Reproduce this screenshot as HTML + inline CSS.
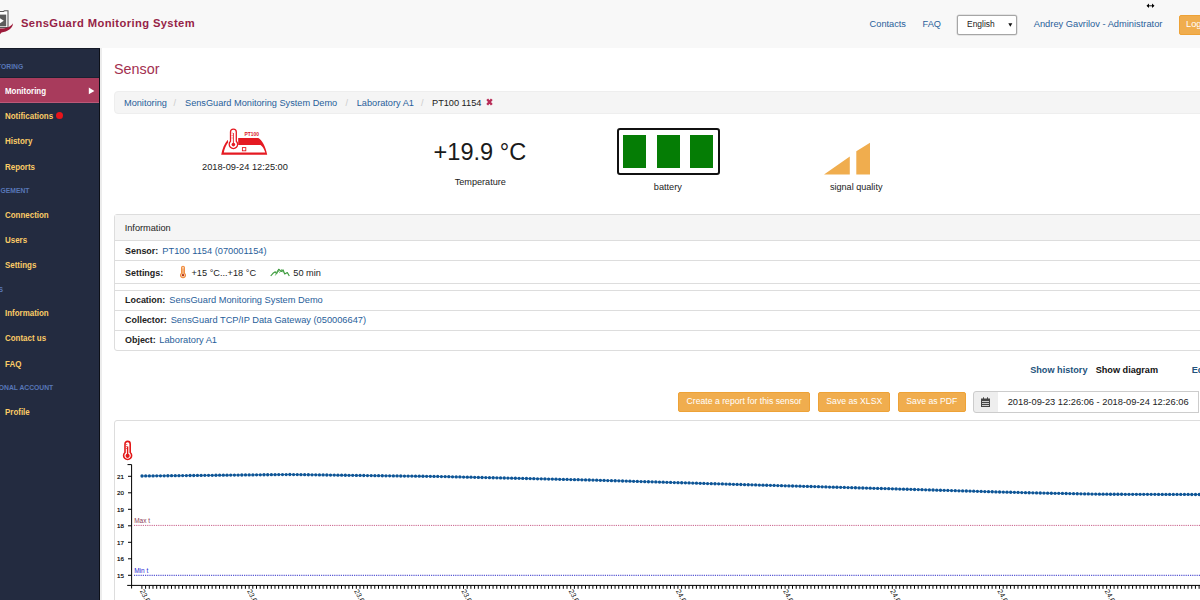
<!DOCTYPE html>
<html><head><meta charset="utf-8"><style>
html,body{margin:0;padding:0;width:1200px;height:600px;overflow:hidden;background:#fff;position:relative;font-family:"Liberation Sans",sans-serif;}
.t{position:absolute;white-space:pre;}
.r{position:absolute;}
</style></head><body>
<div class="r" style="left:0px;top:0px;width:1200px;height:48px;background:#f8f8f8;"></div>
<svg class="r" style="left:0;top:0" width="20" height="40" viewBox="0 0 20 40">
<path d="M-2 11.5 L3.5 11.5 L4.5 10.8 L8 10.8 L8 27.6 L-2 27.6 Z" fill="#fff" stroke="#5a5a5a" stroke-width="1.1"/>
<path d="M-2 14.6 L6.2 14.6 L6.2 26.3 L-2 26.3 Z" fill="#5c5c5c"/>
<path d="M-1 17.6 L3.8 20.8 L-1 24 Z" fill="#fff"/>
<path d="M-2 28.2 C4 29 10.5 27.5 13 23.2 C12.8 28.5 7.5 31.5 1.5 32.4 L-0.5 35 L-2 35 Z" fill="#9c1b3a"/>
</svg>
<div class="t" style="left:21px;top:16.76px;font-size:11.2px;line-height:12.51px;color:#961f47;font-weight:bold;letter-spacing:0.39px;">SensGuard Monitoring System</div>
<div class="t" style="left:869.6px;top:19.06px;font-size:9.22px;line-height:10.30px;color:#28609a;font-weight:normal;">Contacts</div>
<div class="t" style="left:922.6px;top:19.06px;font-size:9.22px;line-height:10.30px;color:#28609a;font-weight:normal;">FAQ</div>
<div class="r" style="left:956.6px;top:14.6px;width:60.4px;height:20px;box-sizing:border-box;background:#fff;border:1px solid #a6a6a6;border-radius:2px;box-shadow:0 0 0 0.5px #d0d0d0;"></div>
<div class="t" style="left:967px;top:19.75px;font-size:8.45px;line-height:9.44px;color:#222;font-weight:normal;">English</div>
<svg class="r" style="left:1008px;top:22.5px" width="5" height="4"><path d="M0.3 0.3 L4.3 0.3 L2.3 3.8 Z" fill="#111"/></svg>
<div class="t" style="left:1033.75px;top:18.98px;font-size:9.3px;line-height:10.39px;color:#28609a;font-weight:normal;">Andrey Gavrilov - Administrator</div>
<div class="r" style="left:1179.3px;top:14.6px;width:40px;height:20.4px;box-sizing:border-box;background:#f0ad4e;border:1px solid #eea236;border-radius:2px;"></div>
<div class="t" style="left:1186px;top:18.98px;font-size:9.3px;line-height:10.39px;color:#fff;font-weight:normal;">Logout</div>
<svg class="r" style="left:1145.5px;top:2px" width="9" height="8"><path d="M1.5 3.8 L7.5 3.8" stroke="#000" stroke-width="0.9"/><path d="M0.5 3.8 L3 1.6 L3 6 Z M8.5 3.8 L6 1.6 L6 6 Z" fill="#000"/></svg>
<div class="r" style="left:0px;top:48px;width:100px;height:552px;background:#232b40;"></div>
<div class="r" style="left:99px;top:48px;width:1px;height:552px;background:#0d1018;"></div>
<div class="r" style="left:0px;top:48px;width:100px;height:1px;background:#151a28;"></div>
<div class="r" style="left:100px;top:48px;width:2px;height:552px;background:#ececec;"></div>
<div class="r" style="left:0px;top:78px;width:99px;height:25px;background:#a83b5c;"></div>
<div class="r" style="left:0px;top:102px;width:99px;height:1px;background:#bb5878;"></div>
<div class="r" style="left:0px;top:77px;width:99px;height:1px;background:#1b2131;"></div>
<div class="t" style="left:-3px;top:62.69px;font-size:6.75px;line-height:7.54px;color:#5877b8;font-weight:bold;">TORING</div>
<div class="t" style="left:5.2px;top:86.08px;font-size:9.3px;line-height:10.39px;color:#fff;font-weight:bold;"><span style="display:inline-block;transform:scaleX(0.855);transform-origin:0 0">Monitoring</span></div>
<svg class="r" style="left:88px;top:87px" width="8" height="8"><path d="M0.8 0.6 L6.4 4 L0.8 7.3 Z" fill="#fff"/></svg>
<div class="t" style="left:5.2px;top:111.08px;font-size:9.3px;line-height:10.39px;color:#fccb66;font-weight:bold;"><span style="display:inline-block;transform:scaleX(0.855);transform-origin:0 0">Notifications</span></div>
<div class="r" style="left:56px;top:112px;width:7px;height:7px;border-radius:50%;background:#e8141a"></div>
<div class="t" style="left:5.2px;top:136.18px;font-size:9.3px;line-height:10.39px;color:#fccb66;font-weight:bold;"><span style="display:inline-block;transform:scaleX(0.855);transform-origin:0 0">History</span></div>
<div class="t" style="left:5.2px;top:161.58px;font-size:9.3px;line-height:10.39px;color:#fccb66;font-weight:bold;"><span style="display:inline-block;transform:scaleX(0.855);transform-origin:0 0">Reports</span></div>
<div class="t" style="left:0.5px;top:187.19px;font-size:6.75px;line-height:7.54px;color:#5877b8;font-weight:bold;">GEMENT</div>
<div class="t" style="left:5.2px;top:210.18px;font-size:9.3px;line-height:10.39px;color:#fccb66;font-weight:bold;"><span style="display:inline-block;transform:scaleX(0.855);transform-origin:0 0">Connection</span></div>
<div class="t" style="left:5.2px;top:235.08px;font-size:9.3px;line-height:10.39px;color:#fccb66;font-weight:bold;"><span style="display:inline-block;transform:scaleX(0.855);transform-origin:0 0">Users</span></div>
<div class="t" style="left:5.2px;top:260.08px;font-size:9.3px;line-height:10.39px;color:#fccb66;font-weight:bold;"><span style="display:inline-block;transform:scaleX(0.855);transform-origin:0 0">Settings</span></div>
<div class="t" style="left:-1.5px;top:285.59px;font-size:6.75px;line-height:7.54px;color:#5877b8;font-weight:bold;">S</div>
<div class="t" style="left:5.2px;top:308.08px;font-size:9.3px;line-height:10.39px;color:#fccb66;font-weight:bold;"><span style="display:inline-block;transform:scaleX(0.855);transform-origin:0 0">Information</span></div>
<div class="t" style="left:5.2px;top:333.28px;font-size:9.3px;line-height:10.39px;color:#fccb66;font-weight:bold;"><span style="display:inline-block;transform:scaleX(0.855);transform-origin:0 0">Contact us</span></div>
<div class="t" style="left:5.2px;top:358.88px;font-size:9.3px;line-height:10.39px;color:#fccb66;font-weight:bold;"><span style="display:inline-block;transform:scaleX(0.855);transform-origin:0 0">FAQ</span></div>
<div class="t" style="left:-1.2px;top:384.29px;font-size:6.75px;line-height:7.54px;color:#5877b8;font-weight:bold;">ONAL ACCOUNT</div>
<div class="t" style="left:5.2px;top:407.18px;font-size:9.3px;line-height:10.39px;color:#fccb66;font-weight:bold;"><span style="display:inline-block;transform:scaleX(0.855);transform-origin:0 0">Profile</span></div>
<div class="t" style="left:114px;top:61.10px;font-size:14.36px;line-height:16.04px;color:#a3304f;font-weight:normal;">Sensor</div>
<div class="r" style="left:114px;top:91px;width:1100px;height:23px;box-sizing:border-box;background:#f5f5f5;border:1px solid #eeeeee;border-radius:4px;"></div>
<div class="t" style="left:124px;top:97.67px;font-size:9.2px;line-height:10.28px;color:#28609a;font-weight:normal;">Monitoring</div>
<div class="t" style="left:173.5px;top:97.67px;font-size:9.2px;line-height:10.28px;color:#ccc;font-weight:normal;">/</div>
<div class="t" style="left:185px;top:97.67px;font-size:9.2px;line-height:10.28px;color:#28609a;font-weight:normal;">SensGuard Monitoring System Demo</div>
<div class="t" style="left:345.5px;top:97.67px;font-size:9.2px;line-height:10.28px;color:#ccc;font-weight:normal;">/</div>
<div class="t" style="left:356.7px;top:97.67px;font-size:9.2px;line-height:10.28px;color:#28609a;font-weight:normal;">Laboratory A1</div>
<div class="t" style="left:421px;top:97.67px;font-size:9.2px;line-height:10.28px;color:#ccc;font-weight:normal;">/</div>
<div class="t" style="left:432px;top:97.67px;font-size:9.2px;line-height:10.28px;color:#222;font-weight:normal;">PT100 1154</div>
<svg class="r" style="left:486px;top:97.5px" width="7" height="8"><path d="M1.2 1.2 L5.8 6.8 M5.8 1.2 L1.2 6.8" stroke="#b82d58" stroke-width="2.3"/></svg>
<svg class="r" style="left:215px;top:122px" width="60" height="40" viewBox="215 122 60 40">
<path d="M221.2 154.7 C222.3 148.5 224.3 144 227.8 139.7 L228.2 142.2 C225.8 145.3 224.6 148.8 223.8 152.6 L265.3 152.6 C264 148.8 262.5 146.3 260.5 145 L238.2 145 L238.2 138 L258.3 138 C262.5 140.5 265.5 146.5 267.2 154.7 Z" fill="#e51a22"/>
<path d="M230.5 141.3 L230.5 132 A2.9 2.9 0 0 1 236.3 132 L236.3 141.3 A4.2 4.2 0 1 1 230.5 141.3 Z" fill="#fff" stroke="#e51a22" stroke-width="1.3"/>
<path d="M233.4 133 L233.4 144" stroke="#e51a22" stroke-width="0.9"/>
<circle cx="233.4" cy="144.6" r="1.8" fill="#e51a22"/>
<path d="M231.6 133 L232.6 133 M231.6 135.5 L232.6 135.5 M231.6 138 L232.6 138" stroke="#e51a22" stroke-width="0.6"/>
<rect x="242.4" y="147.6" width="3.4" height="3.2" fill="none" stroke="#e51a22" stroke-width="0.9"/>
<text x="244.6" y="135.5" font-family="Liberation Sans" font-weight="bold" font-size="4.9" fill="#d8141e" textLength="14.3">PT100</text>
</svg>
<div class="t" style="left:202px;top:162.12px;font-size:9.26px;line-height:10.34px;color:#222;font-weight:normal;">2018-09-24 12:25:00</div>
<div class="t" style="left:433.6px;top:138.59px;font-size:23.55px;line-height:26.31px;color:#1a1a1a;font-weight:normal;">+19.9 °C</div>
<div class="t" style="left:454.7px;top:177.03px;font-size:9.14px;line-height:10.21px;color:#222;font-weight:normal;">Temperature</div>
<div class="r" style="left:617px;top:128px;width:103px;height:46.5px;box-sizing:border-box;border:2.4px solid #111;border-radius:3px;background:#fff;"></div>
<div class="r" style="left:623px;top:134.9px;width:23.2px;height:32.7px;background:#057d05;"></div>
<div class="r" style="left:656.5px;top:134.9px;width:23.2px;height:32.7px;background:#057d05;"></div>
<div class="r" style="left:690px;top:134.9px;width:23.2px;height:32.7px;background:#057d05;"></div>
<div class="t" style="left:653.8px;top:182.42px;font-size:9.2px;line-height:10.28px;color:#222;font-weight:normal;">battery</div>
<svg class="r" style="left:810px;top:130px" width="80" height="50" viewBox="810 130 80 50"><path d="M824 174.4 L849.8 156.6 L849.8 174.4 Z M856.3 174.4 L856.3 151.2 L870 142.8 L870 174.4 Z" fill="#f0ad4e"/></svg>
<div class="t" style="left:829.9px;top:182.06px;font-size:9.1px;line-height:10.16px;color:#222;font-weight:normal;">signal quality</div>
<div class="r" style="left:113.75px;top:214px;width:1100px;height:137px;box-sizing:border-box;border:1px solid #ddd;border-radius:3px;background:#fff;"></div>
<div class="r" style="left:114.75px;top:215px;width:1100px;height:25px;background:#f5f5f5;border-bottom:1px solid #ddd;"></div>
<div class="r" style="left:114.75px;top:260.3px;width:1100px;height:1px;background:#ddd;"></div>
<div class="r" style="left:114.75px;top:282.7px;width:1100px;height:1px;background:#ddd;"></div>
<div class="r" style="left:114.75px;top:290.3px;width:1100px;height:1px;background:#ddd;"></div>
<div class="r" style="left:114.75px;top:310.3px;width:1100px;height:1px;background:#ddd;"></div>
<div class="r" style="left:114.75px;top:330px;width:1100px;height:1px;background:#ddd;"></div>
<div class="t" style="left:124.7px;top:222.67px;font-size:9.2px;line-height:10.28px;color:#222;font-weight:normal;">Information</div>
<div class="t" style="left:125px;top:245.90px;font-size:8.95px;line-height:10.00px;color:#222;font-weight:bold;">Sensor:</div>
<div class="t" style="left:162.3px;top:245.60px;font-size:9.28px;line-height:10.37px;color:#28609a;font-weight:normal;">PT100 1154 (070001154)</div>
<div class="t" style="left:125px;top:267.90px;font-size:8.95px;line-height:10.00px;color:#222;font-weight:bold;">Settings:</div>
<svg class="r" style="left:178px;top:264px" width="10" height="15" viewBox="178 264 10 15"><path d="M181.6 273.2 L181.6 267.6 A1.4 1.4 0 0 1 184.4 267.6 L184.4 273.2 A2.5 2.5 0 1 1 181.6 273.2 Z" fill="#fbd9b8" stroke="#f08a3c" stroke-width="1.1"/><path d="M183 268.5 L183 274" stroke="#f08a3c" stroke-width="1"/><circle cx="183" cy="275.1" r="1.2" fill="#b0301a"/></svg>
<div class="t" style="left:191.5px;top:267.87px;font-size:9.2px;line-height:10.28px;color:#222;font-weight:normal;">+15 °C...+18 °C</div>
<svg class="r" style="left:268px;top:265px" width="24" height="14" viewBox="268 265 24 14"><path d="M270.7 276 L273 273.3 L275.3 271.8 L276.7 273.6 L278.7 269.3 L281.3 271.5 L283 269.8 L284.7 274 L287.3 272.5 L289.3 276" fill="none" stroke="#3c9a3c" stroke-width="1.15" stroke-linejoin="round"/><path d="M275.3 275.5 L277.5 270.5 L279.7 272.5 L281.5 269.5 L283.3 272.7" fill="none" stroke="#5aae5a" stroke-width="0.8"/></svg>
<div class="t" style="left:293.3px;top:267.87px;font-size:9.2px;line-height:10.28px;color:#222;font-weight:normal;">50 min</div>
<div class="t" style="left:125px;top:295.30px;font-size:8.95px;line-height:10.00px;color:#222;font-weight:bold;">Location:</div>
<div class="t" style="left:169.3px;top:295.00px;font-size:9.28px;line-height:10.37px;color:#28609a;font-weight:normal;">SensGuard Monitoring System Demo</div>
<div class="t" style="left:125px;top:315.20px;font-size:8.95px;line-height:10.00px;color:#222;font-weight:bold;">Collector:</div>
<div class="t" style="left:170.7px;top:314.90px;font-size:9.28px;line-height:10.37px;color:#28609a;font-weight:normal;">SensGuard TCP/IP Data Gateway (050006647)</div>
<div class="t" style="left:125px;top:335.20px;font-size:8.95px;line-height:10.00px;color:#222;font-weight:bold;">Object:</div>
<div class="t" style="left:159.3px;top:334.90px;font-size:9.28px;line-height:10.37px;color:#28609a;font-weight:normal;">Laboratory A1</div>
<div class="t" style="left:1030.2px;top:365.04px;font-size:9.13px;line-height:10.20px;color:#23527c;font-weight:bold;">Show history</div>
<div class="t" style="left:1095.7px;top:365.04px;font-size:9.13px;line-height:10.20px;color:#111;font-weight:bold;">Show diagram</div>
<div class="t" style="left:1191.7px;top:365.04px;font-size:9.13px;line-height:10.20px;color:#23527c;font-weight:bold;">Edit</div>
<div class="r" style="left:678.2px;top:391.7px;width:132.0px;height:20.5px;box-sizing:border-box;background:#f0ad4e;border:1px solid #eea236;border-radius:2px;"></div>
<div class="t" style="left:686.5px;top:397.44px;font-size:8.68px;line-height:9.70px;color:#fff;font-weight:normal;">Create a report for this sensor</div>
<div class="r" style="left:818px;top:391.7px;width:72.29999999999995px;height:20.5px;box-sizing:border-box;background:#f0ad4e;border:1px solid #eea236;border-radius:2px;"></div>
<div class="t" style="left:826.3px;top:397.44px;font-size:8.68px;line-height:9.70px;color:#fff;font-weight:normal;">Save as XLSX</div>
<div class="r" style="left:897.5px;top:391.7px;width:68.29999999999995px;height:20.5px;box-sizing:border-box;background:#f0ad4e;border:1px solid #eea236;border-radius:2px;"></div>
<div class="t" style="left:906.3px;top:397.44px;font-size:8.68px;line-height:9.70px;color:#fff;font-weight:normal;">Save as PDF</div>
<div class="r" style="left:973px;top:391.2px;width:26px;height:21.6px;box-sizing:border-box;background:#eee;border:1px solid #ccc;border-radius:3px 0 0 3px;"></div>
<svg class="r" style="left:980px;top:397px" width="11" height="11" viewBox="0 0 11 11"><rect x="1" y="1.5" width="9" height="8.5" fill="#444"/><rect x="2" y="4" width="7" height="1" fill="#ccc"/><rect x="2" y="6" width="7" height="1" fill="#ccc"/><rect x="2" y="8" width="7" height="1" fill="#ccc"/><rect x="3" y="0.3" width="1" height="2" fill="#444"/><rect x="7" y="0.3" width="1" height="2" fill="#444"/></svg>
<div class="r" style="left:998px;top:391.2px;width:200.5px;height:21.6px;box-sizing:border-box;background:#fff;border:1px solid #ccc;border-left:none;"></div>
<div class="t" style="left:1007.7px;top:396.78px;font-size:9.3px;line-height:10.39px;color:#222;font-weight:normal;">2018-09-23 12:26:06 - 2018-09-24 12:26:06</div>
<div class="r" style="left:113.75px;top:420.25px;width:1100px;height:300px;box-sizing:border-box;border:1px solid #ddd;border-radius:3px;background:#fff;"></div>
<svg class="r" style="left:0;top:0" width="1200" height="600" viewBox="0 0 1200 600">
<path d="M125 452.5 L125 444 A2.6 2.6 0 0 1 130.2 444 L130.2 452.5 A4 4 0 1 1 125 452.5 Z" fill="#fff" stroke="#e31818" stroke-width="1.6"/>
<path d="M127.6 446.5 L127.6 455" stroke="#e31818" stroke-width="1.4"/><circle cx="127.6" cy="455.8" r="2.1" fill="#e31818"/>
<path d="M126 444.5 L127.3 444.5 M126 446.5 L127.3 446.5 M126 448.5 L127.3 448.5" stroke="#e31818" stroke-width="0.6"/>
<path d="M131.6 464.6 L131.6 588.5 M127.5 464.6 L131.6 464.6 M127.2 585.4 L1200 585.4" stroke="#000" stroke-width="1"/>
<text x="124" y="478.50" text-anchor="end" font-family="Liberation Sans" font-size="6.2" fill="#000" stroke="#000" stroke-width="0.15">21</text>
<text x="124" y="495.00" text-anchor="end" font-family="Liberation Sans" font-size="6.2" fill="#000" stroke="#000" stroke-width="0.15">20</text>
<text x="124" y="511.50" text-anchor="end" font-family="Liberation Sans" font-size="6.2" fill="#000" stroke="#000" stroke-width="0.15">19</text>
<text x="124" y="528.00" text-anchor="end" font-family="Liberation Sans" font-size="6.2" fill="#000" stroke="#000" stroke-width="0.15">18</text>
<text x="124" y="544.50" text-anchor="end" font-family="Liberation Sans" font-size="6.2" fill="#000" stroke="#000" stroke-width="0.15">17</text>
<text x="124" y="561.00" text-anchor="end" font-family="Liberation Sans" font-size="6.2" fill="#000" stroke="#000" stroke-width="0.15">16</text>
<text x="124" y="577.50" text-anchor="end" font-family="Liberation Sans" font-size="6.2" fill="#000" stroke="#000" stroke-width="0.15">15</text>
<path d="M128 476.30 L131.6 476.30 M128 492.80 L131.6 492.80 M128 509.30 L131.6 509.30 M128 525.80 L131.6 525.80 M128 542.30 L131.6 542.30 M128 558.80 L131.6 558.80 M128 575.30 L131.6 575.30" stroke="#000" stroke-width="1"/>
<path d="M141.90 585.4 L141.90 588.8 M145.60 585.4 L145.60 588.8 M149.29 585.4 L149.29 588.8 M152.99 585.4 L152.99 588.8 M156.69 585.4 L156.69 588.8 M160.38 585.4 L160.38 588.8 M164.08 585.4 L164.08 588.8 M167.78 585.4 L167.78 588.8 M171.47 585.4 L171.47 588.8 M175.17 585.4 L175.17 588.8 M178.87 585.4 L178.87 588.8 M182.56 585.4 L182.56 588.8 M186.26 585.4 L186.26 588.8 M189.96 585.4 L189.96 588.8 M193.65 585.4 L193.65 588.8 M197.35 585.4 L197.35 588.8 M201.04 585.4 L201.04 588.8 M204.74 585.4 L204.74 588.8 M208.44 585.4 L208.44 588.8 M212.13 585.4 L212.13 588.8 M215.83 585.4 L215.83 588.8 M219.53 585.4 L219.53 588.8 M223.22 585.4 L223.22 588.8 M226.92 585.4 L226.92 588.8 M230.62 585.4 L230.62 588.8 M234.31 585.4 L234.31 588.8 M238.01 585.4 L238.01 588.8 M241.71 585.4 L241.71 588.8 M245.40 585.4 L245.40 588.8 M249.10 585.4 L249.10 588.8 M252.80 585.4 L252.80 588.8 M256.49 585.4 L256.49 588.8 M260.19 585.4 L260.19 588.8 M263.89 585.4 L263.89 588.8 M267.58 585.4 L267.58 588.8 M271.28 585.4 L271.28 588.8 M274.98 585.4 L274.98 588.8 M278.67 585.4 L278.67 588.8 M282.37 585.4 L282.37 588.8 M286.07 585.4 L286.07 588.8 M289.76 585.4 L289.76 588.8 M293.46 585.4 L293.46 588.8 M297.16 585.4 L297.16 588.8 M300.85 585.4 L300.85 588.8 M304.55 585.4 L304.55 588.8 M308.24 585.4 L308.24 588.8 M311.94 585.4 L311.94 588.8 M315.64 585.4 L315.64 588.8 M319.33 585.4 L319.33 588.8 M323.03 585.4 L323.03 588.8 M326.73 585.4 L326.73 588.8 M330.42 585.4 L330.42 588.8 M334.12 585.4 L334.12 588.8 M337.82 585.4 L337.82 588.8 M341.51 585.4 L341.51 588.8 M345.21 585.4 L345.21 588.8 M348.91 585.4 L348.91 588.8 M352.60 585.4 L352.60 588.8 M356.30 585.4 L356.30 588.8 M360.00 585.4 L360.00 588.8 M363.69 585.4 L363.69 588.8 M367.39 585.4 L367.39 588.8 M371.09 585.4 L371.09 588.8 M374.78 585.4 L374.78 588.8 M378.48 585.4 L378.48 588.8 M382.18 585.4 L382.18 588.8 M385.87 585.4 L385.87 588.8 M389.57 585.4 L389.57 588.8 M393.27 585.4 L393.27 588.8 M396.96 585.4 L396.96 588.8 M400.66 585.4 L400.66 588.8 M404.36 585.4 L404.36 588.8 M408.05 585.4 L408.05 588.8 M411.75 585.4 L411.75 588.8 M415.44 585.4 L415.44 588.8 M419.14 585.4 L419.14 588.8 M422.84 585.4 L422.84 588.8 M426.53 585.4 L426.53 588.8 M430.23 585.4 L430.23 588.8 M433.93 585.4 L433.93 588.8 M437.62 585.4 L437.62 588.8 M441.32 585.4 L441.32 588.8 M445.02 585.4 L445.02 588.8 M448.71 585.4 L448.71 588.8 M452.41 585.4 L452.41 588.8 M456.11 585.4 L456.11 588.8 M459.80 585.4 L459.80 588.8 M463.50 585.4 L463.50 588.8 M467.20 585.4 L467.20 588.8 M470.89 585.4 L470.89 588.8 M474.59 585.4 L474.59 588.8 M478.29 585.4 L478.29 588.8 M481.98 585.4 L481.98 588.8 M485.68 585.4 L485.68 588.8 M489.38 585.4 L489.38 588.8 M493.07 585.4 L493.07 588.8 M496.77 585.4 L496.77 588.8 M500.47 585.4 L500.47 588.8 M504.16 585.4 L504.16 588.8 M507.86 585.4 L507.86 588.8 M511.56 585.4 L511.56 588.8 M515.25 585.4 L515.25 588.8 M518.95 585.4 L518.95 588.8 M522.64 585.4 L522.64 588.8 M526.34 585.4 L526.34 588.8 M530.04 585.4 L530.04 588.8 M533.73 585.4 L533.73 588.8 M537.43 585.4 L537.43 588.8 M541.13 585.4 L541.13 588.8 M544.82 585.4 L544.82 588.8 M548.52 585.4 L548.52 588.8 M552.22 585.4 L552.22 588.8 M555.91 585.4 L555.91 588.8 M559.61 585.4 L559.61 588.8 M563.31 585.4 L563.31 588.8 M567.00 585.4 L567.00 588.8 M570.70 585.4 L570.70 588.8 M574.40 585.4 L574.40 588.8 M578.09 585.4 L578.09 588.8 M581.79 585.4 L581.79 588.8 M585.49 585.4 L585.49 588.8 M589.18 585.4 L589.18 588.8 M592.88 585.4 L592.88 588.8 M596.58 585.4 L596.58 588.8 M600.27 585.4 L600.27 588.8 M603.97 585.4 L603.97 588.8 M607.67 585.4 L607.67 588.8 M611.36 585.4 L611.36 588.8 M615.06 585.4 L615.06 588.8 M618.76 585.4 L618.76 588.8 M622.45 585.4 L622.45 588.8 M626.15 585.4 L626.15 588.8 M629.84 585.4 L629.84 588.8 M633.54 585.4 L633.54 588.8 M637.24 585.4 L637.24 588.8 M640.93 585.4 L640.93 588.8 M644.63 585.4 L644.63 588.8 M648.33 585.4 L648.33 588.8 M652.02 585.4 L652.02 588.8 M655.72 585.4 L655.72 588.8 M659.42 585.4 L659.42 588.8 M663.11 585.4 L663.11 588.8 M666.81 585.4 L666.81 588.8 M670.51 585.4 L670.51 588.8 M674.20 585.4 L674.20 588.8 M677.90 585.4 L677.90 588.8 M681.60 585.4 L681.60 588.8 M685.29 585.4 L685.29 588.8 M688.99 585.4 L688.99 588.8 M692.69 585.4 L692.69 588.8 M696.38 585.4 L696.38 588.8 M700.08 585.4 L700.08 588.8 M703.78 585.4 L703.78 588.8 M707.47 585.4 L707.47 588.8 M711.17 585.4 L711.17 588.8 M714.87 585.4 L714.87 588.8 M718.56 585.4 L718.56 588.8 M722.26 585.4 L722.26 588.8 M725.96 585.4 L725.96 588.8 M729.65 585.4 L729.65 588.8 M733.35 585.4 L733.35 588.8 M737.04 585.4 L737.04 588.8 M740.74 585.4 L740.74 588.8 M744.44 585.4 L744.44 588.8 M748.13 585.4 L748.13 588.8 M751.83 585.4 L751.83 588.8 M755.53 585.4 L755.53 588.8 M759.22 585.4 L759.22 588.8 M762.92 585.4 L762.92 588.8 M766.62 585.4 L766.62 588.8 M770.31 585.4 L770.31 588.8 M774.01 585.4 L774.01 588.8 M777.71 585.4 L777.71 588.8 M781.40 585.4 L781.40 588.8 M785.10 585.4 L785.10 588.8 M788.80 585.4 L788.80 588.8 M792.49 585.4 L792.49 588.8 M796.19 585.4 L796.19 588.8 M799.89 585.4 L799.89 588.8 M803.58 585.4 L803.58 588.8 M807.28 585.4 L807.28 588.8 M810.98 585.4 L810.98 588.8 M814.67 585.4 L814.67 588.8 M818.37 585.4 L818.37 588.8 M822.07 585.4 L822.07 588.8 M825.76 585.4 L825.76 588.8 M829.46 585.4 L829.46 588.8 M833.16 585.4 L833.16 588.8 M836.85 585.4 L836.85 588.8 M840.55 585.4 L840.55 588.8 M844.24 585.4 L844.24 588.8 M847.94 585.4 L847.94 588.8 M851.64 585.4 L851.64 588.8 M855.33 585.4 L855.33 588.8 M859.03 585.4 L859.03 588.8 M862.73 585.4 L862.73 588.8 M866.42 585.4 L866.42 588.8 M870.12 585.4 L870.12 588.8 M873.82 585.4 L873.82 588.8 M877.51 585.4 L877.51 588.8 M881.21 585.4 L881.21 588.8 M884.91 585.4 L884.91 588.8 M888.60 585.4 L888.60 588.8 M892.30 585.4 L892.30 588.8 M896.00 585.4 L896.00 588.8 M899.69 585.4 L899.69 588.8 M903.39 585.4 L903.39 588.8 M907.09 585.4 L907.09 588.8 M910.78 585.4 L910.78 588.8 M914.48 585.4 L914.48 588.8 M918.18 585.4 L918.18 588.8 M921.87 585.4 L921.87 588.8 M925.57 585.4 L925.57 588.8 M929.27 585.4 L929.27 588.8 M932.96 585.4 L932.96 588.8 M936.66 585.4 L936.66 588.8 M940.36 585.4 L940.36 588.8 M944.05 585.4 L944.05 588.8 M947.75 585.4 L947.75 588.8 M951.44 585.4 L951.44 588.8 M955.14 585.4 L955.14 588.8 M958.84 585.4 L958.84 588.8 M962.53 585.4 L962.53 588.8 M966.23 585.4 L966.23 588.8 M969.93 585.4 L969.93 588.8 M973.62 585.4 L973.62 588.8 M977.32 585.4 L977.32 588.8 M981.02 585.4 L981.02 588.8 M984.71 585.4 L984.71 588.8 M988.41 585.4 L988.41 588.8 M992.11 585.4 L992.11 588.8 M995.80 585.4 L995.80 588.8 M999.50 585.4 L999.50 588.8 M1003.20 585.4 L1003.20 588.8 M1006.89 585.4 L1006.89 588.8 M1010.59 585.4 L1010.59 588.8 M1014.29 585.4 L1014.29 588.8 M1017.98 585.4 L1017.98 588.8 M1021.68 585.4 L1021.68 588.8 M1025.38 585.4 L1025.38 588.8 M1029.07 585.4 L1029.07 588.8 M1032.77 585.4 L1032.77 588.8 M1036.47 585.4 L1036.47 588.8 M1040.16 585.4 L1040.16 588.8 M1043.86 585.4 L1043.86 588.8 M1047.56 585.4 L1047.56 588.8 M1051.25 585.4 L1051.25 588.8 M1054.95 585.4 L1054.95 588.8 M1058.64 585.4 L1058.64 588.8 M1062.34 585.4 L1062.34 588.8 M1066.04 585.4 L1066.04 588.8 M1069.73 585.4 L1069.73 588.8 M1073.43 585.4 L1073.43 588.8 M1077.13 585.4 L1077.13 588.8 M1080.82 585.4 L1080.82 588.8 M1084.52 585.4 L1084.52 588.8 M1088.22 585.4 L1088.22 588.8 M1091.91 585.4 L1091.91 588.8 M1095.61 585.4 L1095.61 588.8 M1099.31 585.4 L1099.31 588.8 M1103.00 585.4 L1103.00 588.8 M1106.70 585.4 L1106.70 588.8 M1110.40 585.4 L1110.40 588.8 M1114.09 585.4 L1114.09 588.8 M1117.79 585.4 L1117.79 588.8 M1121.49 585.4 L1121.49 588.8 M1125.18 585.4 L1125.18 588.8 M1128.88 585.4 L1128.88 588.8 M1132.58 585.4 L1132.58 588.8 M1136.27 585.4 L1136.27 588.8 M1139.97 585.4 L1139.97 588.8 M1143.67 585.4 L1143.67 588.8 M1147.36 585.4 L1147.36 588.8 M1151.06 585.4 L1151.06 588.8 M1154.76 585.4 L1154.76 588.8 M1158.45 585.4 L1158.45 588.8 M1162.15 585.4 L1162.15 588.8 M1165.84 585.4 L1165.84 588.8 M1169.54 585.4 L1169.54 588.8 M1173.24 585.4 L1173.24 588.8 M1176.93 585.4 L1176.93 588.8 M1180.63 585.4 L1180.63 588.8 M1184.33 585.4 L1184.33 588.8 M1188.02 585.4 L1188.02 588.8 M1191.72 585.4 L1191.72 588.8 M1195.42 585.4 L1195.42 588.8 M1199.11 585.4 L1199.11 588.8" stroke="#000" stroke-width="1"/>
<path d="M134 525.4 L1200 525.4" stroke="#c8608a" stroke-width="1" stroke-dasharray="1.2 1"/>
<path d="M134 575.3 L1200 575.3" stroke="#3030c8" stroke-width="1" stroke-dasharray="1.2 1"/>
<text x="134.2" y="522.8" font-family="Liberation Sans" font-size="6.5" fill="#8c3a55">Max t</text>
<text x="134.2" y="572.6" font-family="Liberation Sans" font-size="6.5" fill="#2424d4">Min t</text>
<text transform="translate(139.70,591) rotate(62)" font-family="Liberation Sans" font-size="7.2" fill="#111">23.09 12:00</text>
<text transform="translate(246.90,591) rotate(62)" font-family="Liberation Sans" font-size="7.2" fill="#111">23.09 12:00</text>
<text transform="translate(354.10,591) rotate(62)" font-family="Liberation Sans" font-size="7.2" fill="#111">23.09 12:00</text>
<text transform="translate(461.30,591) rotate(62)" font-family="Liberation Sans" font-size="7.2" fill="#111">23.09 12:00</text>
<text transform="translate(568.50,591) rotate(62)" font-family="Liberation Sans" font-size="7.2" fill="#111">23.09 12:00</text>
<text transform="translate(675.70,591) rotate(62)" font-family="Liberation Sans" font-size="7.2" fill="#111">24.09 00:00</text>
<text transform="translate(782.90,591) rotate(62)" font-family="Liberation Sans" font-size="7.2" fill="#111">24.09 00:00</text>
<text transform="translate(890.10,591) rotate(62)" font-family="Liberation Sans" font-size="7.2" fill="#111">24.09 00:00</text>
<text transform="translate(997.30,591) rotate(62)" font-family="Liberation Sans" font-size="7.2" fill="#111">24.09 00:00</text>
<text transform="translate(1104.50,591) rotate(62)" font-family="Liberation Sans" font-size="7.2" fill="#111">24.09 00:00</text>
<polyline points="142.00,476.00 145.70,475.96 149.39,475.93 153.09,475.89 156.79,475.85 160.48,475.81 164.18,475.78 167.88,475.74 171.57,475.70 175.27,475.66 178.97,475.63 182.66,475.59 186.36,475.55 190.06,475.51 193.75,475.48 197.45,475.44 201.14,475.40 204.84,475.36 208.54,475.33 212.23,475.29 215.93,475.25 219.63,475.21 223.32,475.18 227.02,475.14 230.72,475.10 234.41,475.06 238.11,475.03 241.81,474.99 245.50,474.95 249.20,474.91 252.90,474.88 256.59,474.84 260.29,474.80 263.99,474.76 267.68,474.73 271.38,474.69 275.08,474.65 278.77,474.61 282.47,474.58 286.17,474.54 289.86,474.50 293.56,474.55 297.26,474.60 300.95,474.65 304.65,474.70 308.34,474.74 312.04,474.79 315.74,474.84 319.43,474.89 323.13,474.94 326.83,474.99 330.52,475.04 334.22,475.09 337.92,475.14 341.61,475.19 345.31,475.24 349.01,475.29 352.70,475.34 356.40,475.39 360.10,475.43 363.79,475.48 367.49,475.53 371.19,475.58 374.88,475.63 378.58,475.68 382.28,475.73 385.97,475.78 389.67,475.83 393.37,475.88 397.06,475.93 400.76,475.98 404.46,476.03 408.15,476.08 411.85,476.12 415.54,476.17 419.24,476.22 422.94,476.27 426.63,476.32 430.33,476.37 434.03,476.42 437.72,476.47 441.42,476.53 445.12,476.62 448.81,476.71 452.51,476.79 456.21,476.88 459.90,476.96 463.60,477.05 467.30,477.14 470.99,477.22 474.69,477.31 478.39,477.40 482.08,477.48 485.78,477.57 489.48,477.65 493.17,477.74 496.87,477.83 500.57,477.91 504.26,478.00 507.96,478.09 511.66,478.17 515.35,478.26 519.05,478.34 522.74,478.43 526.44,478.52 530.14,478.60 533.83,478.69 537.53,478.78 541.23,478.86 544.92,478.95 548.62,479.03 552.32,479.12 556.01,479.21 559.71,479.29 563.41,479.38 567.10,479.47 570.80,479.55 574.50,479.64 578.19,479.72 581.89,479.81 585.59,479.90 589.28,479.98 592.98,480.09 596.68,480.20 600.37,480.31 604.07,480.42 607.77,480.53 611.46,480.64 615.16,480.75 618.86,480.87 622.55,480.98 626.25,481.09 629.94,481.20 633.64,481.31 637.34,481.42 641.03,481.53 644.73,481.64 648.43,481.75 652.12,481.86 655.82,481.97 659.52,482.09 663.21,482.20 666.91,482.31 670.61,482.42 674.30,482.53 678.00,482.64 681.70,482.75 685.39,482.86 689.09,482.97 692.79,483.08 696.48,483.19 700.18,483.31 703.88,483.42 707.57,483.53 711.27,483.64 714.97,483.75 718.66,483.86 722.36,483.97 726.06,484.08 729.75,484.19 733.45,484.30 737.14,484.41 740.84,484.52 744.54,484.63 748.23,484.73 751.93,484.84 755.63,484.94 759.32,485.05 763.02,485.15 766.72,485.26 770.41,485.36 774.11,485.47 777.81,485.57 781.50,485.68 785.20,485.78 788.90,485.89 792.59,485.99 796.29,486.09 799.99,486.20 803.68,486.30 807.38,486.41 811.08,486.51 814.77,486.62 818.47,486.72 822.17,486.83 825.86,486.93 829.56,487.04 833.26,487.14 836.95,487.25 840.65,487.35 844.34,487.46 848.04,487.56 851.74,487.67 855.43,487.77 859.13,487.88 862.83,487.98 866.52,488.08 870.22,488.19 873.92,488.29 877.61,488.40 881.31,488.50 885.01,488.61 888.70,488.71 892.40,488.82 896.10,488.93 899.79,489.04 903.49,489.15 907.19,489.26 910.88,489.37 914.58,489.48 918.28,489.59 921.97,489.69 925.67,489.80 929.37,489.91 933.06,490.02 936.76,490.13 940.46,490.24 944.15,490.35 947.85,490.46 951.54,490.57 955.24,490.68 958.94,490.79 962.63,490.90 966.33,491.01 970.03,491.11 973.72,491.22 977.42,491.33 981.12,491.44 984.81,491.55 988.51,491.66 992.21,491.77 995.90,491.88 999.60,491.99 1003.30,492.08 1006.99,492.17 1010.69,492.27 1014.39,492.36 1018.08,492.45 1021.78,492.54 1025.48,492.64 1029.17,492.73 1032.87,492.82 1036.57,492.91 1040.26,493.01 1043.96,493.08 1047.66,493.15 1051.35,493.23 1055.05,493.30 1058.74,493.37 1062.44,493.45 1066.14,493.52 1069.83,493.60 1073.53,493.67 1077.23,493.74 1080.92,493.82 1084.62,493.89 1088.32,493.97 1092.01,494.04 1095.71,494.11 1099.41,494.19 1103.10,494.21 1106.80,494.22 1110.50,494.23 1114.19,494.24 1117.89,494.25 1121.59,494.26 1125.28,494.28 1128.98,494.29 1132.68,494.30 1136.37,494.31 1140.07,494.32 1143.77,494.33 1147.46,494.34 1151.16,494.35 1154.86,494.36 1158.55,494.38 1162.25,494.39 1165.94,494.40 1169.64,494.41 1173.34,494.42 1177.03,494.43 1180.73,494.44 1184.43,494.45 1188.12,494.46 1191.82,494.48 1195.52,494.49 1199.21,494.50 1202.91,494.50" fill="none" stroke="#1a65a5" stroke-width="0.8"/>
<g fill="#0e5596"><circle cx="142.00" cy="476.00" r="1.65"/><circle cx="145.70" cy="475.96" r="1.65"/><circle cx="149.39" cy="475.93" r="1.65"/><circle cx="153.09" cy="475.89" r="1.65"/><circle cx="156.79" cy="475.85" r="1.65"/><circle cx="160.48" cy="475.81" r="1.65"/><circle cx="164.18" cy="475.78" r="1.65"/><circle cx="167.88" cy="475.74" r="1.65"/><circle cx="171.57" cy="475.70" r="1.65"/><circle cx="175.27" cy="475.66" r="1.65"/><circle cx="178.97" cy="475.63" r="1.65"/><circle cx="182.66" cy="475.59" r="1.65"/><circle cx="186.36" cy="475.55" r="1.65"/><circle cx="190.06" cy="475.51" r="1.65"/><circle cx="193.75" cy="475.48" r="1.65"/><circle cx="197.45" cy="475.44" r="1.65"/><circle cx="201.14" cy="475.40" r="1.65"/><circle cx="204.84" cy="475.36" r="1.65"/><circle cx="208.54" cy="475.33" r="1.65"/><circle cx="212.23" cy="475.29" r="1.65"/><circle cx="215.93" cy="475.25" r="1.65"/><circle cx="219.63" cy="475.21" r="1.65"/><circle cx="223.32" cy="475.18" r="1.65"/><circle cx="227.02" cy="475.14" r="1.65"/><circle cx="230.72" cy="475.10" r="1.65"/><circle cx="234.41" cy="475.06" r="1.65"/><circle cx="238.11" cy="475.03" r="1.65"/><circle cx="241.81" cy="474.99" r="1.65"/><circle cx="245.50" cy="474.95" r="1.65"/><circle cx="249.20" cy="474.91" r="1.65"/><circle cx="252.90" cy="474.88" r="1.65"/><circle cx="256.59" cy="474.84" r="1.65"/><circle cx="260.29" cy="474.80" r="1.65"/><circle cx="263.99" cy="474.76" r="1.65"/><circle cx="267.68" cy="474.73" r="1.65"/><circle cx="271.38" cy="474.69" r="1.65"/><circle cx="275.08" cy="474.65" r="1.65"/><circle cx="278.77" cy="474.61" r="1.65"/><circle cx="282.47" cy="474.58" r="1.65"/><circle cx="286.17" cy="474.54" r="1.65"/><circle cx="289.86" cy="474.50" r="1.65"/><circle cx="293.56" cy="474.55" r="1.65"/><circle cx="297.26" cy="474.60" r="1.65"/><circle cx="300.95" cy="474.65" r="1.65"/><circle cx="304.65" cy="474.70" r="1.65"/><circle cx="308.34" cy="474.74" r="1.65"/><circle cx="312.04" cy="474.79" r="1.65"/><circle cx="315.74" cy="474.84" r="1.65"/><circle cx="319.43" cy="474.89" r="1.65"/><circle cx="323.13" cy="474.94" r="1.65"/><circle cx="326.83" cy="474.99" r="1.65"/><circle cx="330.52" cy="475.04" r="1.65"/><circle cx="334.22" cy="475.09" r="1.65"/><circle cx="337.92" cy="475.14" r="1.65"/><circle cx="341.61" cy="475.19" r="1.65"/><circle cx="345.31" cy="475.24" r="1.65"/><circle cx="349.01" cy="475.29" r="1.65"/><circle cx="352.70" cy="475.34" r="1.65"/><circle cx="356.40" cy="475.39" r="1.65"/><circle cx="360.10" cy="475.43" r="1.65"/><circle cx="363.79" cy="475.48" r="1.65"/><circle cx="367.49" cy="475.53" r="1.65"/><circle cx="371.19" cy="475.58" r="1.65"/><circle cx="374.88" cy="475.63" r="1.65"/><circle cx="378.58" cy="475.68" r="1.65"/><circle cx="382.28" cy="475.73" r="1.65"/><circle cx="385.97" cy="475.78" r="1.65"/><circle cx="389.67" cy="475.83" r="1.65"/><circle cx="393.37" cy="475.88" r="1.65"/><circle cx="397.06" cy="475.93" r="1.65"/><circle cx="400.76" cy="475.98" r="1.65"/><circle cx="404.46" cy="476.03" r="1.65"/><circle cx="408.15" cy="476.08" r="1.65"/><circle cx="411.85" cy="476.12" r="1.65"/><circle cx="415.54" cy="476.17" r="1.65"/><circle cx="419.24" cy="476.22" r="1.65"/><circle cx="422.94" cy="476.27" r="1.65"/><circle cx="426.63" cy="476.32" r="1.65"/><circle cx="430.33" cy="476.37" r="1.65"/><circle cx="434.03" cy="476.42" r="1.65"/><circle cx="437.72" cy="476.47" r="1.65"/><circle cx="441.42" cy="476.53" r="1.65"/><circle cx="445.12" cy="476.62" r="1.65"/><circle cx="448.81" cy="476.71" r="1.65"/><circle cx="452.51" cy="476.79" r="1.65"/><circle cx="456.21" cy="476.88" r="1.65"/><circle cx="459.90" cy="476.96" r="1.65"/><circle cx="463.60" cy="477.05" r="1.65"/><circle cx="467.30" cy="477.14" r="1.65"/><circle cx="470.99" cy="477.22" r="1.65"/><circle cx="474.69" cy="477.31" r="1.65"/><circle cx="478.39" cy="477.40" r="1.65"/><circle cx="482.08" cy="477.48" r="1.65"/><circle cx="485.78" cy="477.57" r="1.65"/><circle cx="489.48" cy="477.65" r="1.65"/><circle cx="493.17" cy="477.74" r="1.65"/><circle cx="496.87" cy="477.83" r="1.65"/><circle cx="500.57" cy="477.91" r="1.65"/><circle cx="504.26" cy="478.00" r="1.65"/><circle cx="507.96" cy="478.09" r="1.65"/><circle cx="511.66" cy="478.17" r="1.65"/><circle cx="515.35" cy="478.26" r="1.65"/><circle cx="519.05" cy="478.34" r="1.65"/><circle cx="522.74" cy="478.43" r="1.65"/><circle cx="526.44" cy="478.52" r="1.65"/><circle cx="530.14" cy="478.60" r="1.65"/><circle cx="533.83" cy="478.69" r="1.65"/><circle cx="537.53" cy="478.78" r="1.65"/><circle cx="541.23" cy="478.86" r="1.65"/><circle cx="544.92" cy="478.95" r="1.65"/><circle cx="548.62" cy="479.03" r="1.65"/><circle cx="552.32" cy="479.12" r="1.65"/><circle cx="556.01" cy="479.21" r="1.65"/><circle cx="559.71" cy="479.29" r="1.65"/><circle cx="563.41" cy="479.38" r="1.65"/><circle cx="567.10" cy="479.47" r="1.65"/><circle cx="570.80" cy="479.55" r="1.65"/><circle cx="574.50" cy="479.64" r="1.65"/><circle cx="578.19" cy="479.72" r="1.65"/><circle cx="581.89" cy="479.81" r="1.65"/><circle cx="585.59" cy="479.90" r="1.65"/><circle cx="589.28" cy="479.98" r="1.65"/><circle cx="592.98" cy="480.09" r="1.65"/><circle cx="596.68" cy="480.20" r="1.65"/><circle cx="600.37" cy="480.31" r="1.65"/><circle cx="604.07" cy="480.42" r="1.65"/><circle cx="607.77" cy="480.53" r="1.65"/><circle cx="611.46" cy="480.64" r="1.65"/><circle cx="615.16" cy="480.75" r="1.65"/><circle cx="618.86" cy="480.87" r="1.65"/><circle cx="622.55" cy="480.98" r="1.65"/><circle cx="626.25" cy="481.09" r="1.65"/><circle cx="629.94" cy="481.20" r="1.65"/><circle cx="633.64" cy="481.31" r="1.65"/><circle cx="637.34" cy="481.42" r="1.65"/><circle cx="641.03" cy="481.53" r="1.65"/><circle cx="644.73" cy="481.64" r="1.65"/><circle cx="648.43" cy="481.75" r="1.65"/><circle cx="652.12" cy="481.86" r="1.65"/><circle cx="655.82" cy="481.97" r="1.65"/><circle cx="659.52" cy="482.09" r="1.65"/><circle cx="663.21" cy="482.20" r="1.65"/><circle cx="666.91" cy="482.31" r="1.65"/><circle cx="670.61" cy="482.42" r="1.65"/><circle cx="674.30" cy="482.53" r="1.65"/><circle cx="678.00" cy="482.64" r="1.65"/><circle cx="681.70" cy="482.75" r="1.65"/><circle cx="685.39" cy="482.86" r="1.65"/><circle cx="689.09" cy="482.97" r="1.65"/><circle cx="692.79" cy="483.08" r="1.65"/><circle cx="696.48" cy="483.19" r="1.65"/><circle cx="700.18" cy="483.31" r="1.65"/><circle cx="703.88" cy="483.42" r="1.65"/><circle cx="707.57" cy="483.53" r="1.65"/><circle cx="711.27" cy="483.64" r="1.65"/><circle cx="714.97" cy="483.75" r="1.65"/><circle cx="718.66" cy="483.86" r="1.65"/><circle cx="722.36" cy="483.97" r="1.65"/><circle cx="726.06" cy="484.08" r="1.65"/><circle cx="729.75" cy="484.19" r="1.65"/><circle cx="733.45" cy="484.30" r="1.65"/><circle cx="737.14" cy="484.41" r="1.65"/><circle cx="740.84" cy="484.52" r="1.65"/><circle cx="744.54" cy="484.63" r="1.65"/><circle cx="748.23" cy="484.73" r="1.65"/><circle cx="751.93" cy="484.84" r="1.65"/><circle cx="755.63" cy="484.94" r="1.65"/><circle cx="759.32" cy="485.05" r="1.65"/><circle cx="763.02" cy="485.15" r="1.65"/><circle cx="766.72" cy="485.26" r="1.65"/><circle cx="770.41" cy="485.36" r="1.65"/><circle cx="774.11" cy="485.47" r="1.65"/><circle cx="777.81" cy="485.57" r="1.65"/><circle cx="781.50" cy="485.68" r="1.65"/><circle cx="785.20" cy="485.78" r="1.65"/><circle cx="788.90" cy="485.89" r="1.65"/><circle cx="792.59" cy="485.99" r="1.65"/><circle cx="796.29" cy="486.09" r="1.65"/><circle cx="799.99" cy="486.20" r="1.65"/><circle cx="803.68" cy="486.30" r="1.65"/><circle cx="807.38" cy="486.41" r="1.65"/><circle cx="811.08" cy="486.51" r="1.65"/><circle cx="814.77" cy="486.62" r="1.65"/><circle cx="818.47" cy="486.72" r="1.65"/><circle cx="822.17" cy="486.83" r="1.65"/><circle cx="825.86" cy="486.93" r="1.65"/><circle cx="829.56" cy="487.04" r="1.65"/><circle cx="833.26" cy="487.14" r="1.65"/><circle cx="836.95" cy="487.25" r="1.65"/><circle cx="840.65" cy="487.35" r="1.65"/><circle cx="844.34" cy="487.46" r="1.65"/><circle cx="848.04" cy="487.56" r="1.65"/><circle cx="851.74" cy="487.67" r="1.65"/><circle cx="855.43" cy="487.77" r="1.65"/><circle cx="859.13" cy="487.88" r="1.65"/><circle cx="862.83" cy="487.98" r="1.65"/><circle cx="866.52" cy="488.08" r="1.65"/><circle cx="870.22" cy="488.19" r="1.65"/><circle cx="873.92" cy="488.29" r="1.65"/><circle cx="877.61" cy="488.40" r="1.65"/><circle cx="881.31" cy="488.50" r="1.65"/><circle cx="885.01" cy="488.61" r="1.65"/><circle cx="888.70" cy="488.71" r="1.65"/><circle cx="892.40" cy="488.82" r="1.65"/><circle cx="896.10" cy="488.93" r="1.65"/><circle cx="899.79" cy="489.04" r="1.65"/><circle cx="903.49" cy="489.15" r="1.65"/><circle cx="907.19" cy="489.26" r="1.65"/><circle cx="910.88" cy="489.37" r="1.65"/><circle cx="914.58" cy="489.48" r="1.65"/><circle cx="918.28" cy="489.59" r="1.65"/><circle cx="921.97" cy="489.69" r="1.65"/><circle cx="925.67" cy="489.80" r="1.65"/><circle cx="929.37" cy="489.91" r="1.65"/><circle cx="933.06" cy="490.02" r="1.65"/><circle cx="936.76" cy="490.13" r="1.65"/><circle cx="940.46" cy="490.24" r="1.65"/><circle cx="944.15" cy="490.35" r="1.65"/><circle cx="947.85" cy="490.46" r="1.65"/><circle cx="951.54" cy="490.57" r="1.65"/><circle cx="955.24" cy="490.68" r="1.65"/><circle cx="958.94" cy="490.79" r="1.65"/><circle cx="962.63" cy="490.90" r="1.65"/><circle cx="966.33" cy="491.01" r="1.65"/><circle cx="970.03" cy="491.11" r="1.65"/><circle cx="973.72" cy="491.22" r="1.65"/><circle cx="977.42" cy="491.33" r="1.65"/><circle cx="981.12" cy="491.44" r="1.65"/><circle cx="984.81" cy="491.55" r="1.65"/><circle cx="988.51" cy="491.66" r="1.65"/><circle cx="992.21" cy="491.77" r="1.65"/><circle cx="995.90" cy="491.88" r="1.65"/><circle cx="999.60" cy="491.99" r="1.65"/><circle cx="1003.30" cy="492.08" r="1.65"/><circle cx="1006.99" cy="492.17" r="1.65"/><circle cx="1010.69" cy="492.27" r="1.65"/><circle cx="1014.39" cy="492.36" r="1.65"/><circle cx="1018.08" cy="492.45" r="1.65"/><circle cx="1021.78" cy="492.54" r="1.65"/><circle cx="1025.48" cy="492.64" r="1.65"/><circle cx="1029.17" cy="492.73" r="1.65"/><circle cx="1032.87" cy="492.82" r="1.65"/><circle cx="1036.57" cy="492.91" r="1.65"/><circle cx="1040.26" cy="493.01" r="1.65"/><circle cx="1043.96" cy="493.08" r="1.65"/><circle cx="1047.66" cy="493.15" r="1.65"/><circle cx="1051.35" cy="493.23" r="1.65"/><circle cx="1055.05" cy="493.30" r="1.65"/><circle cx="1058.74" cy="493.37" r="1.65"/><circle cx="1062.44" cy="493.45" r="1.65"/><circle cx="1066.14" cy="493.52" r="1.65"/><circle cx="1069.83" cy="493.60" r="1.65"/><circle cx="1073.53" cy="493.67" r="1.65"/><circle cx="1077.23" cy="493.74" r="1.65"/><circle cx="1080.92" cy="493.82" r="1.65"/><circle cx="1084.62" cy="493.89" r="1.65"/><circle cx="1088.32" cy="493.97" r="1.65"/><circle cx="1092.01" cy="494.04" r="1.65"/><circle cx="1095.71" cy="494.11" r="1.65"/><circle cx="1099.41" cy="494.19" r="1.65"/><circle cx="1103.10" cy="494.21" r="1.65"/><circle cx="1106.80" cy="494.22" r="1.65"/><circle cx="1110.50" cy="494.23" r="1.65"/><circle cx="1114.19" cy="494.24" r="1.65"/><circle cx="1117.89" cy="494.25" r="1.65"/><circle cx="1121.59" cy="494.26" r="1.65"/><circle cx="1125.28" cy="494.28" r="1.65"/><circle cx="1128.98" cy="494.29" r="1.65"/><circle cx="1132.68" cy="494.30" r="1.65"/><circle cx="1136.37" cy="494.31" r="1.65"/><circle cx="1140.07" cy="494.32" r="1.65"/><circle cx="1143.77" cy="494.33" r="1.65"/><circle cx="1147.46" cy="494.34" r="1.65"/><circle cx="1151.16" cy="494.35" r="1.65"/><circle cx="1154.86" cy="494.36" r="1.65"/><circle cx="1158.55" cy="494.38" r="1.65"/><circle cx="1162.25" cy="494.39" r="1.65"/><circle cx="1165.94" cy="494.40" r="1.65"/><circle cx="1169.64" cy="494.41" r="1.65"/><circle cx="1173.34" cy="494.42" r="1.65"/><circle cx="1177.03" cy="494.43" r="1.65"/><circle cx="1180.73" cy="494.44" r="1.65"/><circle cx="1184.43" cy="494.45" r="1.65"/><circle cx="1188.12" cy="494.46" r="1.65"/><circle cx="1191.82" cy="494.48" r="1.65"/><circle cx="1195.52" cy="494.49" r="1.65"/><circle cx="1199.21" cy="494.50" r="1.65"/><circle cx="1202.91" cy="494.50" r="1.65"/></g>
</svg>
</body></html>
